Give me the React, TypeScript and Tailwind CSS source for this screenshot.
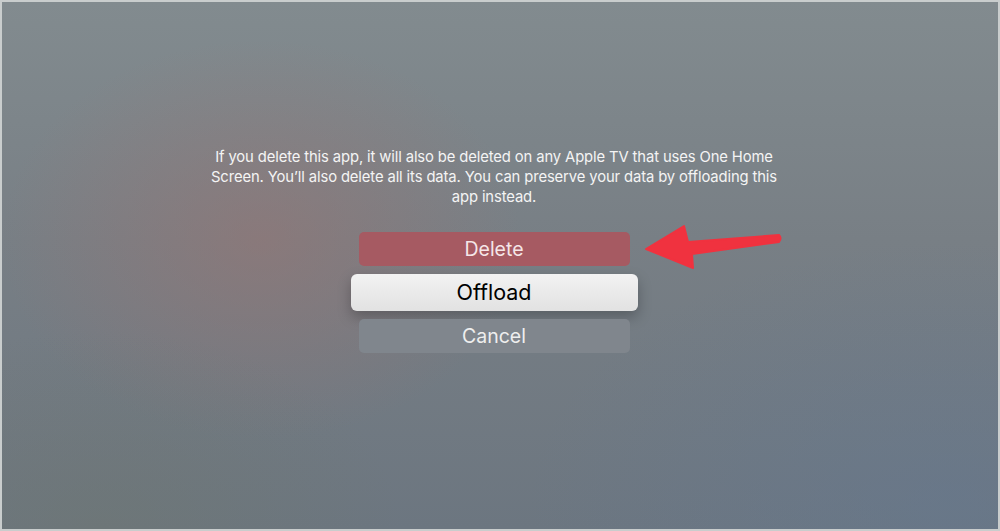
export default function App() {
  return (
    <div className="relative h-[531px] w-[1000px] overflow-hidden border-2 border-[#c9cdcd] bg-[#78828a] font-['Inter',_'Roboto',_sans-serif]">
      <div className="absolute inset-0 bg-[linear-gradient(180deg,#828b8f_0%,#787f85_45%,#6c7680_100%)]" />
      <div className="absolute inset-0 bg-[radial-gradient(ellipse_260px_200px_at_26%_45%,rgba(155,115,112,0.5),transparent)]" />
      <div className="absolute inset-0 bg-[radial-gradient(ellipse_420px_260px_at_95%_95%,rgba(100,120,145,0.5),transparent)]" />
      <div className="absolute inset-0 bg-[radial-gradient(ellipse_300px_200px_at_10%_100%,rgba(110,118,112,0.5),transparent)]" />

      <main className="relative flex flex-col items-center pr-[12px] pt-[145px]">
        <p className="text-center text-[14.8px] leading-[20px] tracking-[-0.12px] text-[#f4f4f4]">
          If you delete this app, it will also be deleted on any Apple TV that uses One Home
          <br />
          Screen. You’ll also delete all its data. You can preserve your data by offloading this
          <br />
          app instead.
        </p>

        <div className="mt-[25px] flex flex-col items-center gap-2">
          <button className="h-[34px] w-[271px] rounded-[5px] bg-[#a65a62] pt-px text-[19.5px] text-[#f5e6e8]">
            Delete
          </button>
          <button className="h-[37px] w-[287px] rounded-[6px] bg-[linear-gradient(180deg,#f2f2f2,#e2e2e2)] text-[21.5px] text-black shadow-[0_6px_14px_rgba(0,0,0,0.25)]">
            Offload
          </button>
          <button className="h-[34px] w-[271px] rounded-[5px] bg-[#80868d] pt-px text-[19.5px] text-[#eeeeee]">
            Cancel
          </button>
        </div>
      </main>

      <svg className="absolute left-0 top-0" width="1000" height="531" viewBox="0 0 1000 531">
        <path
          d="M646 249 L684 226 L688 242 L779 235 Q782 238 779 242 L692 254 L693 268 Z"
          fill="#f0323f"
          stroke="#f0323f"
          strokeWidth="2"
          strokeLinejoin="round"
          transform="translate(-2 -2)"
        />
      </svg>
    </div>
  );
}
